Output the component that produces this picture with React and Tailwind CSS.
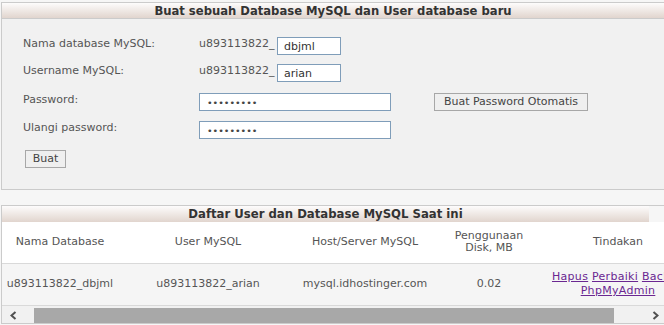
import React from 'react';

function Btn({ children, className = '' }) {
  return (
    <button
      type="button"
      className={`h-[18px] px-[5px] border border-[#a7a7a7] bg-[#efefef] text-[#444] text-[11px] leading-[16px] ${className}`}
    >
      {children}
    </button>
  );
}

function Field({ value, type = 'text', className = '' }) {
  return (
    <input
      type={type}
      defaultValue={value}
      readOnly
      className={`h-[18px] border border-[#7f9db9] bg-white px-[6px] text-[#333] outline-none ${className}`}
    />
  );
}

const cols = [
  { w: 'w-[116px]', head: 'Nama Database', cell: 'u893113822_dbjml' },
  { w: 'w-[180px]', head: 'User MySQL', cell: 'u893113822_arian' },
  { w: 'w-[134px]', head: 'Host/Server MySQL', cell: 'mysql.idhostinger.com' },
  { w: 'w-[114px]', head: 'Penggunaan Disk, MB', cell: '0.02' },
];

export default function App() {
  return (
    <div className="w-[664px] h-[325px] overflow-hidden bg-[#f6f6f6] pt-[2px] font-['DejaVu_Sans',Verdana,sans-serif] text-[11px] text-[#555]">
      {/* form panel */}
      <div className="ml-[1px] h-[188px] border-t border-l border-b border-[#cbcbcb] bg-[#f1f1f1]">
        <div className="h-[16px] border-b border-[#cbcbcb] bg-gradient-to-b from-[#fdfcfc] to-[#e1d5ce] text-center font-bold text-[11.6px] leading-[16px] text-[#333]">
          Buat sebuah Database MySQL dan User database baru
        </div>

        <div className="pl-[21px] pt-[18px] flex flex-col">
          <div className="flex items-start h-[27px]">
            <span className="w-[176px] leading-[13px]">Nama database MySQL:</span>
            <span className="w-[78px] leading-[13px]">u893113822_</span>
            <Field value="dbjml" className="w-[64px] text-[11px]" />
          </div>
          <div className="flex items-start h-[29px]">
            <span className="w-[176px] leading-[13px]">Username MySQL:</span>
            <span className="w-[78px] leading-[13px]">u893113822_</span>
            <Field value="arian" className="w-[64px] text-[11px]" />
          </div>
          <div className="flex items-start h-[28px]">
            <span className="w-[176px] leading-[13px]">Password:</span>
            <Field type="password" value="arian2014" className="w-[192px] text-[9.5px] pl-[7px] text-[#444]" />
            <Btn className="ml-[43px] w-[154px]">Buat Password Otomatis</Btn>
          </div>
          <div className="flex items-start h-[29px]">
            <span className="w-[176px] leading-[13px]">Ulangi password:</span>
            <Field type="password" value="arian2014" className="w-[192px] text-[9.5px] pl-[7px] text-[#444]" />
          </div>
          <div className="pl-[2px]">
            <Btn className="w-[41px]">Buat</Btn>
          </div>
        </div>
      </div>

      {/* list panel */}
      <div className="ml-[1px] mt-[15px] border-t border-l border-b border-[#cbcbcb]">
        <div className="w-[647px] h-[16px] bg-gradient-to-b from-[#fdfcfc] to-[#e1d5ce] text-center font-bold text-[11.7px] leading-[16px] text-[#333]">
          Daftar User dan Database MySQL Saat ini
        </div>
        <div className="overflow-hidden">
          <table className="w-[688px] table-fixed border-collapse">
            <thead>
              <tr className="h-[41px] bg-white border-b border-[#d9d9d9]">
                {cols.map(c => (
                  <th key={c.head} className={`${c.w} font-normal text-center leading-[12px] px-[8px]`}>{c.head}</th>
                ))}
                <th className="w-[144px] font-normal text-center">Tindakan</th>
              </tr>
            </thead>
            <tbody>
              <tr className="h-[42px] bg-[#f5f5f5] border-b border-[#d9d9d9]">
                {cols.map(c => (
                  <td key={c.head} className="text-center whitespace-nowrap">{c.cell}</td>
                ))}
                <td className="text-center leading-[14px] px-[1px] tracking-[0.3px] text-[#6a2791]">
                  <a className="underline" href="#">Hapus</a>{' '}
                  <a className="underline" href="#">Perbaiki</a>{' '}
                  <a className="underline" href="#">Backup</a>{' '}
                  <a className="underline" href="#">PhpMyAdmin</a>
                </td>
              </tr>
            </tbody>
          </table>
        </div>
        {/* horizontal scrollbar */}
        <div className="flex h-[17px] bg-[#f1f1f1] pt-[2px]">
          <div className="w-[32px] flex items-center justify-center pr-[10px]">
            <svg width="7" height="9" viewBox="0 0 7 9"><polyline points="5.5,1 1.5,4.5 5.5,8" fill="none" stroke="#505050" strokeWidth="2" /></svg>
          </div>
          <div className="w-[580px] h-[15px] bg-[#a8a8a8]" />
          <div className="flex-1 flex items-center justify-end pr-[5px]">
            <svg width="7" height="9" viewBox="0 0 7 9"><polyline points="1.5,1 5.5,4.5 1.5,8" fill="none" stroke="#505050" strokeWidth="2" /></svg>
          </div>
        </div>
      </div>
    </div>
  );
}
